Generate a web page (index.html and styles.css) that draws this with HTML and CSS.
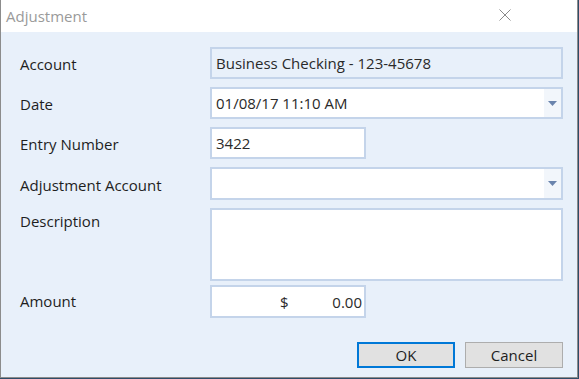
FILE: index.html
```html
<!DOCTYPE html>
<html>
<head>
<meta charset="utf-8">
<link rel="stylesheet" href="styles.css">
</head>
<body>
<div class="window">
  <div class="titlebar">
    <span class="title">Adjustment</span>
    <svg class="close" width="12" height="12" viewBox="0 0 12 12"><path d="M0.5 0.5L11.5 11.5M11.5 0.5L0.5 11.5" stroke="#8a8a8a" stroke-width="1" fill="none"/></svg>
  </div>
  <div class="content">
    <div class="form">
      <div class="label">Account</div>
      <div class="field readonly wide">Business Checking - 123-45678</div>

      <div class="label">Date</div>
      <div class="field wide combo"><span class="val">01/08/17 11:10 AM</span><span class="drop"><svg width="9" height="5" viewBox="0 0 9 5"><path d="M0 0H9L4.5 5Z" fill="#6a84ad"/></svg></span></div>

      <div class="label">Entry Number</div>
      <div class="field narrow">3422</div>

      <div class="label">Adjustment Account</div>
      <div class="field wide combo tall"><span class="val"></span><span class="drop"><svg width="9" height="5" viewBox="0 0 9 5"><path d="M0 0H9L4.5 5Z" fill="#6a84ad"/></svg></span></div>

      <div class="label top">Description</div>
      <div class="field wide desc"></div>

      <div class="label close-row">Amount</div>
      <div class="field narrow amount close-row"><span class="cur">$</span><span class="num">0.00</span></div>
    </div>
    <div class="buttons">
      <button class="btn ok">OK</button>
      <button class="btn">Cancel</button>
    </div>
  </div>
</div>
</body>
</html>
```
FILE: styles.css
```css
html, body {
  margin: 0;
  padding: 0;
  background: #2f4c68;
}
body {
  width: 579px;
  height: 379px;
  overflow: hidden;
  font-family: "Open Sans", "Noto Sans", sans-serif;
  font-size: 15px;
  color: #1e1e1e;
}
.window {
  width: 576px;
  height: 377px;
  border: 1px solid #8c8c8c;
  border-top: none;
  background: #e8f0fa;
  display: flex;
  flex-direction: column;
}
.titlebar {
  height: 32px;
  background: #ffffff;
  display: flex;
  align-items: center;
  justify-content: space-between;
  padding: 0 66px 0 5px;
  flex: none;
}
.title {
  color: #9a9a9a;
  font-size: 15px;
  margin-top: -1px;
}
.close {
  margin-top: -2px;
}
.content {
  padding: 15px 14px 0 19px;
  flex: 1;
}
.form {
  display: grid;
  grid-template-columns: 190px 353px;
  row-gap: 8px;
  align-items: center;
}
.label {
  line-height: 20px;
  color: #1e1e1e;
  margin-top: 2px;
}
.label.top {
  align-self: start;
  margin-top: 3px;
}
.field {
  box-sizing: border-box;
  height: 32px;
  border: 2px solid #c4d4ea;
  background: #ffffff;
  padding: 0 4px;
  display: flex;
  align-items: center;
  line-height: 20px;
  color: #2a2a2a;
}
.field.readonly {
  background: #e8f0fa;
}
.field.wide {
  width: 353px;
}
.field.narrow {
  width: 156px;
}
.field.tall {
  height: 33px;
}
.combo {
  padding-right: 0;
}
.combo .val {
  flex: 1;
}
.drop {
  width: 17px;
  align-self: stretch;
  background: #f2f6fb;
  display: flex;
  align-items: center;
  justify-content: center;
}
.desc {
  height: 73px;
}
.label.close-row {
  margin-top: -6px;
}
.field.close-row {
  margin-top: -4px;
}
.amount {
  height: 33px;
  padding-right: 2px;
}
.cur {
  margin-left: 64px;
  flex: 1;
}
.buttons {
  display: flex;
  justify-content: flex-end;
  gap: 10px;
  margin-top: 24px;
}
.btn {
  box-sizing: border-box;
  width: 98px;
  height: 26px;
  background: #e1e1e1;
  border: 1px solid #adadad;
  font-family: "Open Sans", "Noto Sans", sans-serif;
  font-size: 15px;
  color: #1e1e1e;
  padding: 0;
  line-height: 20px;
}
.btn.ok {
  border: 2px solid #0078d7;
}
```
